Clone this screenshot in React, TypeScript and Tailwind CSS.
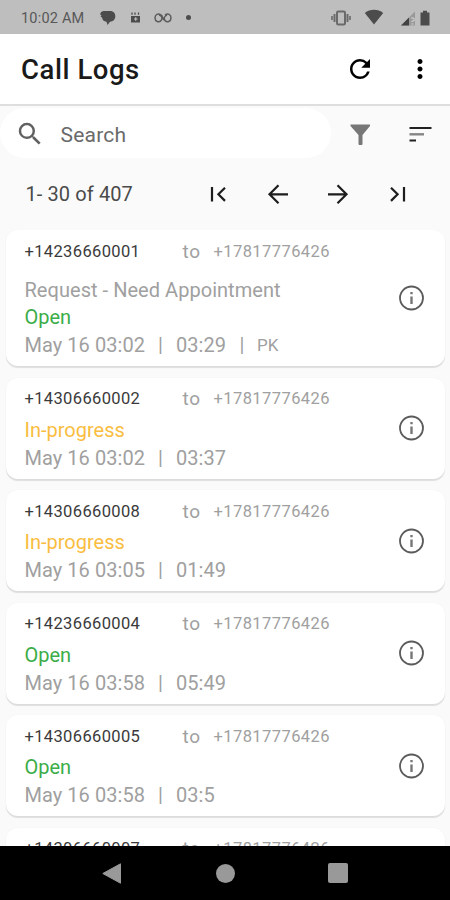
import React from "react";
import { MdMoreVert, MdRefresh, MdSearch } from "react-icons/md";

type Call = {
  from: string;
  status: "Open" | "In-progress";
  date: string;
  duration: string;
  subject?: string;
  agent?: string;
};

const calls: Call[] = [
  { from: "+14236660001", status: "Open", date: "May 16 03:02", duration: "03:29", subject: "Request - Need Appointment", agent: "PK" },
  { from: "+14306660002", status: "In-progress", date: "May 16 03:02", duration: "03:37" },
  { from: "+14306660008", status: "In-progress", date: "May 16 03:05", duration: "01:49" },
  { from: "+14236660004", status: "Open", date: "May 16 03:58", duration: "05:49" },
  { from: "+14306660005", status: "Open", date: "May 16 03:58", duration: "03:5" },
  { from: "+14306660007", status: "Open", date: "May 16 03:58", duration: "02:11" },
];

function StatusBar() {
  return (
    <header className="flex h-[34px] shrink-0 items-center bg-[#bebebe] pl-[21px] text-[#4c4c4c]">
      <span className="mt-[3px] w-[79px] whitespace-nowrap text-[14.5px] tracking-[0.2px] text-[#585858]">10:02 AM</span>
      <svg className="mt-[2px] h-4 w-4" viewBox="0 0 16 16" fill="currentColor">
        <path d="M.5 3Q1 1.300 3.500 1H10c3.500 0 5.300 2.200 5.300 5.200 0 3.200-2.100 5.300-5.300 5.500L7.500 15 6.500 11.700C3.800 11.500 2.300 9.800 2 7.500L.5 6.500 1.500 5.500 .2 4.500z" />
      </svg>
      <svg className="ml-[13.5px] mt-[1px] h-[11px] w-[11px]" viewBox="0 0 11 11">
        <path d="M1 4h9v6.500H1z" fill="currentColor" />
        <path d="M2 .5v2.200M5 .5v2.200M8.500.5v2.200" stroke="currentColor" strokeWidth="1.3" />
        <path d="M4 7h3.500M5.700 5.300v3.500" fill="none" stroke="#bebebe" strokeWidth="1.2" />
      </svg>
      <svg className="ml-[13px] mt-[1px] h-[10px] w-[18px]" viewBox="0 0 18 10" fill="none" stroke="#5c5c5c" strokeWidth="1.5">
        <path d="M7 2C4-.1 1 1.500 1 5s4 5 6 2.500S7.500 2.500 5 2M11 2c3-2.100 6-.5 6 3s-4 5-6 2.500.5-5 2-5.500M7 2c2 1 1.500 5 4 5.500" />
      </svg>
      <span className="ml-[14px] h-[5px] w-[5px] rounded-full bg-current" />
      <svg className="ml-auto mt-[1px] h-4 w-[22px]" viewBox="0 0 22 16" fill="none" stroke="#6a6a6a">
        <rect x="6" y="1.5" width="8" height="13" rx="1.2" strokeWidth="2" />
        <path d="M3.500 4v8M16.500 4v8" strokeWidth="2" />
        <path d="M1 6v4M19 6v4" strokeWidth="1.6" />
      </svg>
      <svg className="ml-[11px] h-4 w-5" viewBox="0 0 20 16" fill="currentColor">
        <path d="M.8 4C6-.3 14-.3 19.200 4L10 15.500z" />
      </svg>
      <svg className="ml-[16px] mt-[1px] h-4 w-4" viewBox="0 0 16 16">
        <path d="M1 15.500L15 1.500v14z" fill="#999" />
        <path d="M1 15.500L9 7.500v8z" fill="#424242" />
        <path d="M11 8h3v3h-2v1M11.500 14h2" fill="none" stroke="#d4d4d4" />
      </svg>
      <svg className="ml-[4px] mr-5 mt-[1px] h-4 w-[10px]" viewBox="0 0 10 16" fill="currentColor">
        <path d="M.5 2.500H3V.8h4v1.700h2.500v13h-9z" />
      </svg>
    </header>
  );
}

function CallCard({ call }: { call: Call }) {
  return (
    <article
      className={`flex shrink-0 rounded-[12px] bg-white shadow-[0_2px_1px_rgba(0,0,0,0.11),0_0_2px_rgba(0,0,0,0.04)] ${
        call.subject ? "h-[136px]" : "h-[101px]"
      }`}
    >
      <div className="flex flex-1 flex-col pl-[18.5px] text-[20px] text-[#a0a0a0]">
        <div className="mt-[11px] flex h-[22px] items-center whitespace-nowrap text-[16.5px]">
          <span className="w-[158px] tracking-[0.36px] text-[#3a3a3a]">{call.from}</span>
          <span className="w-[31px] text-[19px] tracking-[0.7px]">to</span>
          <span className="tracking-[0.42px]">+17817776426</span>
        </div>
        {call.subject && <div className="mt-[13px] h-7 leading-7 tracking-[0.04px]">{call.subject}</div>}
        <div
          className={`h-7 leading-7 ${call.subject ? "-mt-px" : "mt-[5px]"} ${
            call.status === "Open" ? "text-[#3bad48]" : "text-[#f9bd40]"
          }`}
        >
          {call.status}
        </div>
        <div className="flex h-7 items-center whitespace-nowrap leading-7 tracking-[0.05px]">
          <span className="w-[133.5px]">{call.date}</span>
          <span className="w-[18px]">|</span>
          <span>{call.duration}</span>
          {call.agent && (
            <>
              <span className="ml-[13.5px] w-[17.5px]">|</span>
              <span className="text-[17px]">{call.agent}</span>
            </>
          )}
        </div>
      </div>
      <svg className="mr-[20px] h-7 w-7 self-center" viewBox="0 0 28 28" fill="none" stroke="#5b5b5b">
        <circle cx="14.5" cy="14" r="11.5" strokeWidth="1.8" />
        <path d="M14.500 12.500v7.500M14.500 8v2.300" stroke="#777" strokeWidth="2.4" />
      </svg>
    </article>
  );
}

export default function App() {
  return (
    <div className="flex h-[900px] w-[450px] flex-col overflow-hidden bg-[#fafafa] font-['Roboto',sans-serif]">
      <StatusBar />
      <div className="flex h-[72px] shrink-0 items-center border-b-2 border-[#dedede] bg-white pl-[21px]">
        <h1 className="mt-px flex-1 text-[27.5px] font-medium tracking-[0.55px] text-[#1a1a1a]">Call Logs</h1>
        <MdRefresh className="mr-[30px] h-[30px] w-[30px] text-black" />
        <MdMoreVert className="mr-[15px] h-[30px] w-[30px] text-black" />
      </div>
      <div className="mt-[2px] flex h-[50px] shrink-0 items-center">
        <div className="flex h-[50px] w-[331px] items-center rounded-[25px] bg-white pl-[15px]">
          <MdSearch className="mt-[2px] h-[30px] w-[30px] text-[#606060]" />
          <span className="ml-[15.5px] mt-[5px] text-[21px] tracking-[0.2px] text-[#6a6a6a]">Search</span>
        </div>
        <svg className="ml-[19px] mt-[2px] h-[21px] w-5" viewBox="0 0 20 21" fill="#777">
          <path d="M.5.5H20V2L12.500 11v9q0 1-1 1h-2q-1 0-1-1v-9L.5 2z" />
        </svg>
        <svg className="ml-[39px] mt-[2px] h-4 w-[23px]" viewBox="0 0 23 16">
          <path d="M.5 2h22M.5 14.500h6.500" stroke="#222" strokeWidth="2.2" />
          <path d="M.5 8.300h14.500" stroke="#858585" strokeWidth="2.4" />
        </svg>
      </div>
      <div className="flex h-[72px] shrink-0 items-center text-[#1d1d1d]">
        <span className="w-[204px] pl-[25.5px] text-[20px] tracking-[0.1px] text-[#4a4a4a]">1- 30 of 407</span>
        <div className="flex gap-[32px]">
          <svg className="h-7 w-7" viewBox="0 0 28 28" fill="none" stroke="currentColor" strokeWidth="2.2">
            <path d="M8 7v14.500M21 7.700l-6.600 6.600 6.600 6.600" />
          </svg>
          <svg className="h-7 w-7" viewBox="0 0 28 28" fill="none" stroke="currentColor" strokeWidth="2.2">
            <path d="M24 14.300H6M14.500 5.200L5.500 14.300l9 9" />
          </svg>
          <svg className="h-7 w-7" viewBox="0 0 28 28" fill="none" stroke="currentColor" strokeWidth="2.2">
            <path d="M4 14.300h18M13.500 5.200l9 9.100-9 9" />
          </svg>
          <svg className="h-7 w-7" viewBox="0 0 28 28" fill="none" stroke="currentColor" strokeWidth="2.2">
            <path d="M20 7v14.500M7 7.700l6.600 6.600L7 20.900" />
          </svg>
        </div>
      </div>
      <main className="flex min-h-0 flex-1 flex-col gap-[11.5px] overflow-hidden pl-[6px] pr-[5px]">
        {calls.map((call) => (
          <CallCard key={call.from} call={call} />
        ))}
      </main>
      <nav className="flex h-[54px] shrink-0 items-center bg-black pl-[102px]">
        <svg className="h-[21px] w-5" viewBox="0 0 20 21">
          <path d="M.8 10.500L18.500.8v19.400z" fill="#999" stroke="#999" strokeLinejoin="round" />
        </svg>
        <span className="ml-[94px] h-[19px] w-[19px] rounded-full bg-[#999]" />
        <span className="ml-[93px] h-5 w-5 rounded-[2px] bg-[#999]" />
      </nav>
    </div>
  );
}
